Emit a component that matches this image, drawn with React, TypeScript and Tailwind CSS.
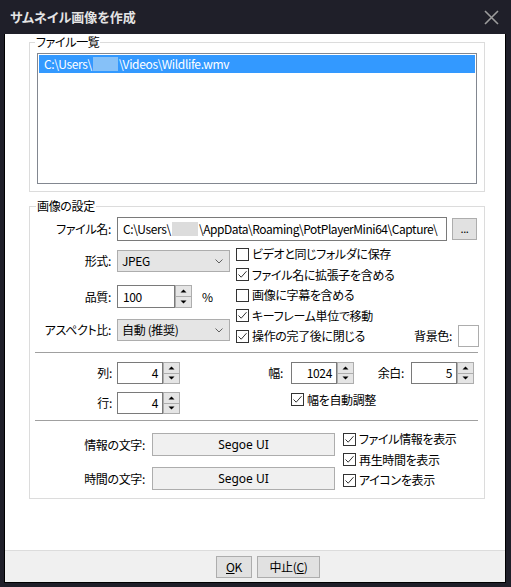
import React from "react";

function Check({ on }: { on?: boolean }) {
  return (
    <span className="w-[13px] h-[13px] border border-[#333333] bg-white flex items-center justify-center shrink-0">
      {on && (
        <svg width="11" height="11" viewBox="0 0 11 11">
          <path d="M1.5 5.5 L4.2 8.2 L9.5 2.2" fill="none" stroke="#333333" strokeWidth="1" />
        </svg>
      )}
    </span>
  );
}

function CheckRow(props: { on?: boolean; label: string; className?: string }) {
  return (
    <div className={"flex items-center gap-[3px] " + (props.className || "")}>
      <Check on={props.on} />
      <span className="leading-[14px] whitespace-nowrap">{props.label}</span>
    </div>
  );
}

function Spinner() {
  return (
    <div className="w-[17px] flex flex-col">
      <div className="flex-1 border border-[#adadad] bg-[#e5e5e5] flex items-center justify-center">
        <svg width="7" height="4" viewBox="0 0 7 4">
          <path d="M0.5 3.5 L3.5 0.5 L6.5 3.5 Z" fill="#000" />
        </svg>
      </div>
      <div className="flex-1 border border-t-0 border-[#adadad] bg-[#e5e5e5] flex items-center justify-center">
        <svg width="7" height="4" viewBox="0 0 7 4">
          <path d="M0.5 0.5 L3.5 3.5 L6.5 0.5 Z" fill="#000" />
        </svg>
      </div>
    </div>
  );
}

function Spin(props: { value: string; className?: string }) {
  return (
    <div className={"flex h-[22px] " + (props.className || "")}>
      <div className="w-[46px] border border-[#7a7a7a] bg-white flex items-center justify-end pr-[4px]">
        {props.value}
      </div>
      <Spinner />
    </div>
  );
}

function Combo(props: { text: string }) {
  return (
    <div className="ml-[6px] w-[113px] h-[22px] border border-[#adadad] bg-[#e5e5e5] flex items-center justify-between pl-[4px] pr-[6px]">
      <span>{props.text}</span>
      <svg width="8" height="5" viewBox="0 0 8 5">
        <path d="M0.5 0.5 L4 4 L7.5 0.5" fill="none" stroke="#606060" strokeWidth="1" />
      </svg>
    </div>
  );
}

const App = () => {
  return (
    <div className="w-[511px] h-[587px] bg-[#1f1f29] flex flex-col text-[12px] tracking-[-0.35px] text-black font-['Noto_Sans_CJK_JP','Noto_Sans',sans-serif] [font-feature-settings:'palt']">
      {/* title bar */}
      <div className="h-[34px] flex items-center justify-between pl-[10px] pr-[12px]">
        <span className="text-[13px] font-bold tracking-normal text-[#e4e4e4]">サムネイル画像を作成</span>
        <svg width="15" height="15" viewBox="0 0 15 15">
          <path d="M1 1 L14 14 M14 1 L1 14" stroke="#9c9c9c" strokeWidth="1.6" />
        </svg>
      </div>

      <div className="ml-[4px] w-[502px] h-[549px] border-x border-b border-black bg-white flex flex-col">
        <div className="h-[516px] flex flex-col">
          {/* file list */}
          <fieldset className="ml-[24px] w-[456px] border border-[#dcdcdc] px-0 pb-[7px] pt-[3px]">
            <legend className="ml-[5px] px-[1px] leading-[16px]">ファイル一覧</legend>
            <div className="mx-[7px] h-[131px] border border-[#828790] p-[1px]">
              <div className="h-[18px] bg-[#3399ff] text-white pl-[5px] flex items-center whitespace-nowrap">
                <span>C:\Users\</span>
                <span className="inline-block w-[25px] h-[14px] bg-[#86c1f8] mx-[1px]"></span>
                <span>\Videos\Wildlife.wmv</span>
              </div>
            </div>
          </fieldset>

          {/* image settings */}
          <fieldset className="ml-[24px] mt-[6px] w-[456px] border border-[#dcdcdc] px-0 pb-[7px] pt-[3px]">
            <legend className="ml-[6px] px-[1px] leading-[16px]">画像の設定</legend>

            <div className="flex items-center h-[24px]">
              <div className="w-[81px] text-right">ファイル名:</div>
              <div className="ml-[6px] w-[330px] h-[24px] border border-[#7a7a7a] flex items-center pl-[5px] overflow-hidden whitespace-nowrap">
                <span>C:\Users\</span>
                <span className="inline-block w-[26px] h-[14px] bg-[#dcdcdc] mx-[1px] shrink-0"></span>
                <span className="tracking-[-0.45px]">\AppData\Roaming\PotPlayerMini64\Capture\</span>
              </div>
              <div className="ml-[5px] w-[25px] h-[22px] border border-[#adadad] bg-[#e1e1e1] flex items-center justify-center text-[11px] leading-[10px] pb-[2px]">
                ...
              </div>
            </div>

            <div className="flex h-[108px] mt-[3px]">
              <div className="w-[200px] flex flex-col">
                <div className="mt-[6px] flex items-center h-[22px]">
                  <div className="w-[81px] text-right">形式:</div>
                  <Combo text="JPEG" />
                </div>
                <div className="mt-[13px] flex items-center h-[23px]">
                  <div className="w-[81px] text-right">品質:</div>
                  <div className="ml-[6px] flex h-[23px]">
                    <div className="w-[58px] border border-[#7a7a7a] bg-white flex items-center pl-[5px]">100</div>
                    <Spinner />
                  </div>
                  <span className="ml-[10px]">%</span>
                </div>
                <div className="mt-[11px] flex items-center h-[22px]">
                  <div className="w-[81px] text-right">アスペクト比:</div>
                  <Combo text="自動 (推奨)" />
                </div>
              </div>
              <div className="ml-[6px] flex-1 flex flex-col pr-[5px]">
                <CheckRow className="h-[20.5px]" label="ビデオと同じフォルダに保存" />
                <CheckRow className="h-[20.5px]" on label="ファイル名に拡張子を含める" />
                <CheckRow className="h-[20.5px]" label="画像に字幕を含める" />
                <CheckRow className="h-[20.5px]" on label="キーフレーム単位で移動" />
                <div className="h-[20.5px] flex items-center">
                  <CheckRow on label="操作の完了後に閉じる" />
                  <span className="ml-auto mr-[6px]">背景色:</span>
                  <div className="w-[21px] h-[22px] border border-[#adadad] bg-white"></div>
                </div>
              </div>
            </div>

            <div className="ml-[5px] w-[443px] h-px bg-[#a0a0a0]"></div>

            <div className="mt-[9px] flex items-center h-[22px]">
              <div className="w-[82px] text-right">列:</div>
              <Spin className="ml-[5px]" value="4" />
              <div className="w-[103px] text-right">幅:</div>
              <Spin className="ml-[8px]" value="1024" />
              <div className="w-[50px] text-right">余白:</div>
              <Spin className="ml-[7px]" value="5" />
            </div>
            <div className="mt-[8px] flex h-[22px]">
              <div className="w-[82px] text-right self-center">行:</div>
              <Spin className="ml-[5px]" value="4" />
              <CheckRow className="ml-[111px] h-[15px]" on label="幅を自動調整" />
            </div>

            <div className="mt-[6px] ml-[5px] w-[443px] h-px bg-[#a0a0a0]"></div>

            <div className="mt-[12px] flex">
              <div className="flex flex-col">
                <div className="flex items-center h-[23px]">
                  <div className="w-[115px] text-right">情報の文字:</div>
                  <div className="ml-[7px] w-[183px] h-[23px] border border-[#adadad] bg-[#f0f0f0] flex items-center justify-center tracking-normal font-['Noto_Sans',sans-serif]">
                    Segoe UI
                  </div>
                </div>
                <div className="mt-[11px] flex items-center h-[23px]">
                  <div className="w-[115px] text-right">時間の文字:</div>
                  <div className="ml-[7px] w-[183px] h-[23px] border border-[#adadad] bg-[#f0f0f0] flex items-center justify-center tracking-normal font-['Noto_Sans',sans-serif]">
                    Segoe UI
                  </div>
                </div>
              </div>
              <div className="ml-[8px] -mt-[4px] flex flex-col">
                <CheckRow className="h-[20.5px]" on label="ファイル情報を表示" />
                <CheckRow className="h-[20.5px]" on label="再生時間を表示" />
                <CheckRow className="h-[20.5px]" on label="アイコンを表示" />
              </div>
            </div>
          </fieldset>
        </div>

        {/* footer */}
        <div className="h-[32px] border-t border-[#dcdcdc] bg-[#f0f0f0] flex pt-[5px] pl-[211px] gap-[5px]">
          <div className="w-[36px] h-[22px] border border-[#adadad] bg-[#e1e1e1] flex items-center justify-center">
            <span><span className="underline">O</span>K</span>
          </div>
          <div className="w-[63px] h-[22px] border border-[#adadad] bg-[#e1e1e1] flex items-center justify-center">
            <span>中止(<span className="underline">C</span>)</span>
          </div>
        </div>
      </div>
    </div>
  );
};

export default App;
